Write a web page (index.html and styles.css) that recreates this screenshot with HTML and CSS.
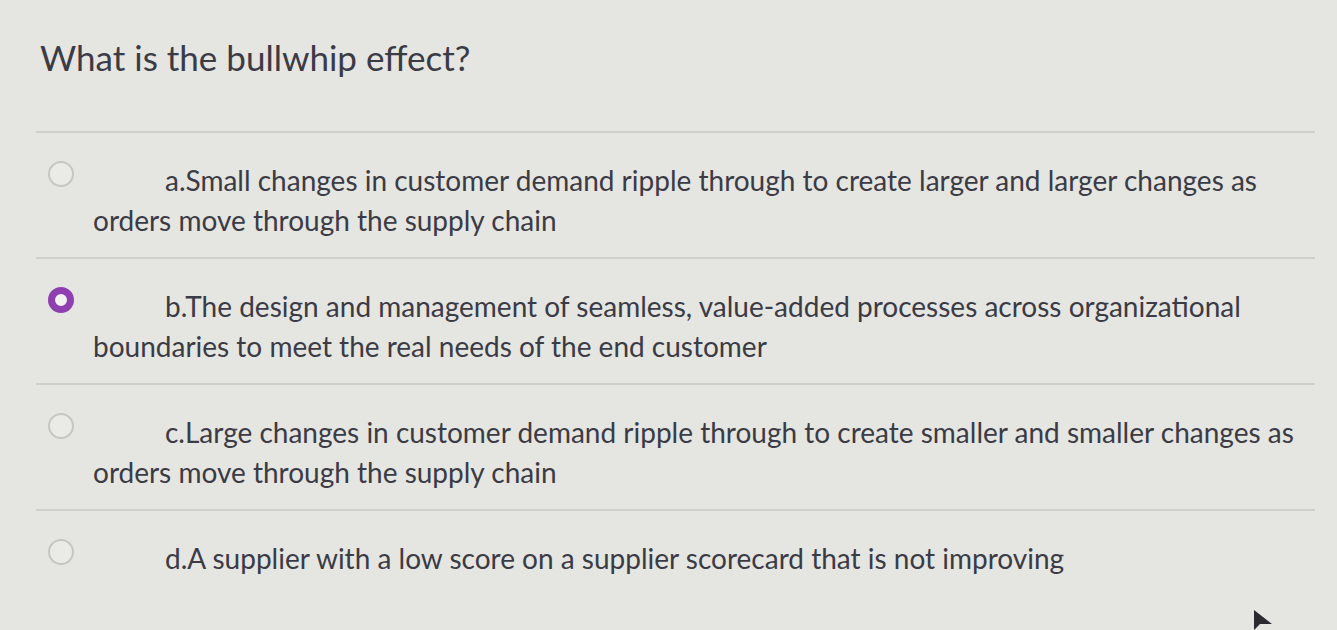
FILE: index.html
```html
<!DOCTYPE html>
<html>
<head>
<meta charset="utf-8">
<link rel="stylesheet" href="styles.css">
</head>
<body>
<div class="page">
  <h1 class="question">What is the bullwhip effect?</h1>
  <div class="options">
    <div class="option">
      <span class="radio"></span>
      <p class="label">a.Small changes in customer demand ripple through to create larger and larger changes as orders move through the supply chain</p>
    </div>
    <div class="option">
      <span class="radio checked"></span>
      <p class="label">b.The design and management of seamless, value-added processes across organizational boundaries to meet the real needs of the end customer</p>
    </div>
    <div class="option">
      <span class="radio"></span>
      <p class="label">c.Large changes in customer demand ripple through to create smaller and smaller changes as orders move through the supply chain</p>
    </div>
    <div class="option last">
      <span class="radio"></span>
      <p class="label">d.A supplier with a low score on a supplier scorecard that is not improving</p>
    </div>
  </div>
  <svg class="cursor" width="24" height="24" viewBox="0 0 24 24"><path d="M2 2 L2 22 L8 16 L20 16 Z" fill="#2a2a30"/></svg>
</div>
</body>
</html>
```
FILE: styles.css
```css
html, body {
  margin: 0;
  padding: 0;
  background: #e5e5e1;
}
.page {
  position: relative;
  width: 1337px;
  height: 630px;
  overflow: hidden;
  font-family: Lato, "Open Sans", sans-serif;
  color: #3b3b45;
}
.question {
  margin: 0;
  padding: 34px 0 0 40px;
  height: 131px;
  box-sizing: border-box;
  font-size: 35px;
  font-weight: 400;
  line-height: 46px;
}
.options {
  margin: 0 22px 0 36px;
}
.option {
  display: flex;
  align-items: flex-start;
  border-top: 2px solid #cfcfcb;
  padding: 27px 0 20px 12px;
  height: 126px;
  box-sizing: border-box;
}
.radio {
  flex: none;
  width: 22px;
  height: 22px;
  border: 2px solid #c6c6c2;
  border-radius: 50%;
  margin-top: 1px;
  margin-right: 19px;
  background: #eaeae6;
}
.radio.checked {
  border: 7px solid #8e3fb0;
  width: 12px;
  height: 12px;
  background: #f2f2f2;
}
.label {
  margin: 0;
  font-size: 28px;
  line-height: 40px;
  text-indent: 72px;
  max-width: 1215px;
}
.cursor {
  position: absolute;
  left: 1252px;
  top: 608px;
}
```
